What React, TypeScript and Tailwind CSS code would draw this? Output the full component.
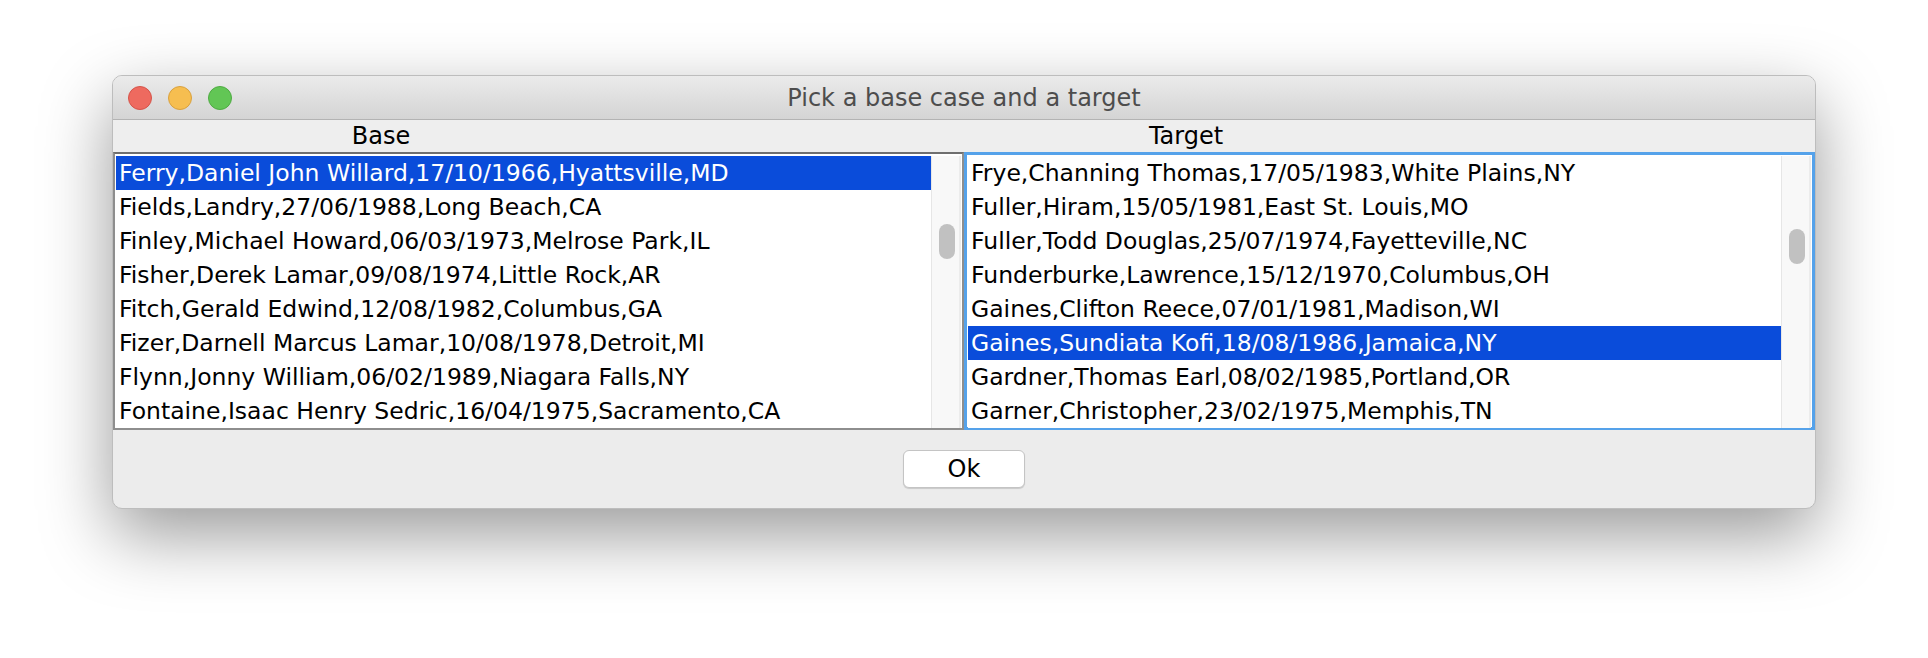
import React from "react";

const baseRows = [
  "Ferry,Daniel John Willard,17/10/1966,Hyattsville,MD",
  "Fields,Landry,27/06/1988,Long Beach,CA",
  "Finley,Michael Howard,06/03/1973,Melrose Park,IL",
  "Fisher,Derek Lamar,09/08/1974,Little Rock,AR",
  "Fitch,Gerald Edwind,12/08/1982,Columbus,GA",
  "Fizer,Darnell Marcus Lamar,10/08/1978,Detroit,MI",
  "Flynn,Jonny William,06/02/1989,Niagara Falls,NY",
  "Fontaine,Isaac Henry Sedric,16/04/1975,Sacramento,CA",
];

const targetRows = [
  "Frye,Channing Thomas,17/05/1983,White Plains,NY",
  "Fuller,Hiram,15/05/1981,East St. Louis,MO",
  "Fuller,Todd Douglas,25/07/1974,Fayetteville,NC",
  "Funderburke,Lawrence,15/12/1970,Columbus,OH",
  "Gaines,Clifton Reece,07/01/1981,Madison,WI",
  "Gaines,Sundiata Kofi,18/08/1986,Jamaica,NY",
  "Gardner,Thomas Earl,08/02/1985,Portland,OR",
  "Garner,Christopher,23/02/1975,Memphis,TN",
];

function Rows({ rows, selected }: { rows: string[]; selected: number }) {
  return (
    <div className="flex-1 h-[272px] overflow-hidden bg-white">
      {rows.map((r, i) => (
        <div
          key={i}
          className={
            i === selected
              ? "h-[34px] leading-[34px] pl-[3px] whitespace-nowrap bg-[#0a4cda] text-white"
              : "h-[34px] leading-[34px] pl-[3px] whitespace-nowrap text-black"
          }
        >
          {r}
        </div>
      ))}
    </div>
  );
}

function Scrollbar({ thumbTop }: { thumbTop: string }) {
  return (
    <div className="w-[30px] h-[272px] bg-[#f8f8f8] border-l border-l-[#e6e6e6] border-r-2 border-r-[#ececec] flex flex-col">
      <div className={thumbTop} />
      <div className="ml-[7px] w-[16px] h-[35px] rounded-full bg-[#c1c1c1]" />
    </div>
  );
}

export default function App() {
  return (
    <div
      className="w-[1928px] h-[658px] bg-white pt-[75px] pl-[112px] overflow-hidden"
      style={{ fontFamily: '"DejaVu Sans", "Lucida Grande", Verdana, sans-serif' }}
    >
      <div className="w-[1704px] h-[434px] rounded-[10px] bg-[#ececec] border border-[#bdbdbd] shadow-[0_26px_70px_rgba(0,0,0,0.4)] flex flex-col overflow-hidden">
        {/* title bar */}
        <div className="h-[44px] shrink-0 bg-gradient-to-b from-[#ebebeb] to-[#d4d4d4] border-b border-[#b3b3b3] flex items-center relative">
          <div className="flex gap-[16px] pl-[15px]">
            <span className="w-[24px] h-[24px] rounded-full bg-[#ee6a5f] border border-[#d5544a]" />
            <span className="w-[24px] h-[24px] rounded-full bg-[#f6be50] border border-[#d9a13f]" />
            <span className="w-[24px] h-[24px] rounded-full bg-[#62c655] border border-[#4fab43]" />
          </div>
          <div className="absolute inset-0 flex items-center justify-center text-[24px] text-[#4d4d4d]">
            Pick a base case and a target
          </div>
        </div>

        {/* column headers */}
        <div className="h-[32px] shrink-0 flex items-center bg-[#eeeeee] text-[24px] text-black">
          <div className="w-[536px] text-center">Base</div>
          <div className="w-[1074px] text-center">Target</div>
        </div>

        {/* lists */}
        <div className="flex text-[23.5px] h-[278px] shrink-0">
          <div className="w-[851px] flex border-2 border-[#8e8e8e] border-t-[#6f6f6f] px-[1px] pt-[2px] bg-white">
            <Rows rows={baseRows} selected={0} />
            <Scrollbar thumbTop="h-[68px]" />
          </div>
          <div className="w-[851px] flex border-[3px] border-[#55a2ea] px-[1px] pt-[1px] bg-white">
            <Rows rows={targetRows} selected={5} />
            <Scrollbar thumbTop="h-[73px]" />
          </div>
        </div>

        {/* footer */}
        <div className="flex-1 flex justify-center pt-[20px]">
          <button className="w-[122px] h-[38px] rounded-[6px] bg-white border border-[#c4c4c4] shadow-[0_1px_1px_rgba(0,0,0,0.15)] text-[24px] text-black leading-none">
            Ok
          </button>
        </div>
      </div>
    </div>
  );
}
